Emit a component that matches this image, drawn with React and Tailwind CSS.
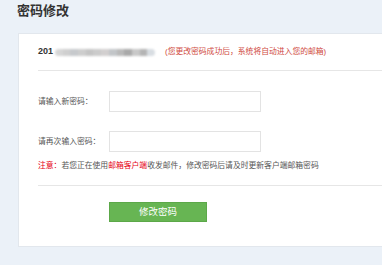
import React from "react";

const blur = ["#d6d6d6", "#cfcfcf", "#c6c9cc", "#cdcdcd", "#c4c4c4", "#cbcbcb", "#d2cfcf", "#c2c5c8", "#b9b9b9", "#a9a9a9", "#c8c8c8", "#b4b4b4", "#d8dde2"];

export default function App() {
  return (
    <div className="min-h-[265px] w-[382px] overflow-hidden bg-[#ebf1f8] font-['Liberation_Sans','Noto_Sans_CJK_SC',sans-serif] text-[#555]">
      {/* Title */}
      <div className="pl-[17px] pt-[3px] h-[33px] text-[13px] font-bold leading-[15px] text-[#333]">
        密码修改
      </div>

      {/* Card */}
      <div className="ml-[18px] w-[400px] bg-white border border-[#e2e7ed] pl-[19px] pb-[24px]">
        <div className="h-[37px] flex items-center border-b border-[#e6e6e6]">
          <span className="text-[9px] font-bold text-[#333]">201</span>
          <div className="flex items-center h-[7px] ml-[2px] w-[100px] blur-[1px] rounded-full overflow-hidden">
            {blur.map((c, i) => (
              <span key={i} className="h-full flex-1" style={{ backgroundColor: c }} />
            ))}
          </div>
          <span className="ml-[10px] text-[7.8px] text-[#cf4a3e]">(您更改密码成功后，系统将自动进入您的邮箱)</span>
        </div>

        <div className="border-b border-[#e6e6e6] pb-[13px]">
          <div className="mt-[20px] flex items-center">
            <label className="w-[71px] text-[7.8px]">请输入新密码：</label>
            <input type="password" className="w-[152px] h-[21px] border border-[#e3e3e3] outline-none" />
          </div>
          <div className="mt-[19px] flex items-center">
            <label className="w-[71px] text-[7.8px]">请再次输入密码：</label>
            <input type="password" className="w-[152px] h-[21px] border border-[#e3e3e3] outline-none" />
          </div>
          <p className="mt-[8px] text-[7.8px] leading-[12px]">
            <span className="text-[#e60012]">注意：</span>若您正在使用
            <span className="text-[#e60012]">邮箱客户端</span>收发邮件，修改密码后请及时更新客户端邮箱密码
          </p>
        </div>

        <div className="flex pl-[71px] pt-[16px]">
          <button className="w-[98px] h-[20px] bg-[#67b553] border border-[#5ca849] text-white text-[9.5px] leading-none">
            修改密码
          </button>
        </div>
      </div>
    </div>
  );
}
